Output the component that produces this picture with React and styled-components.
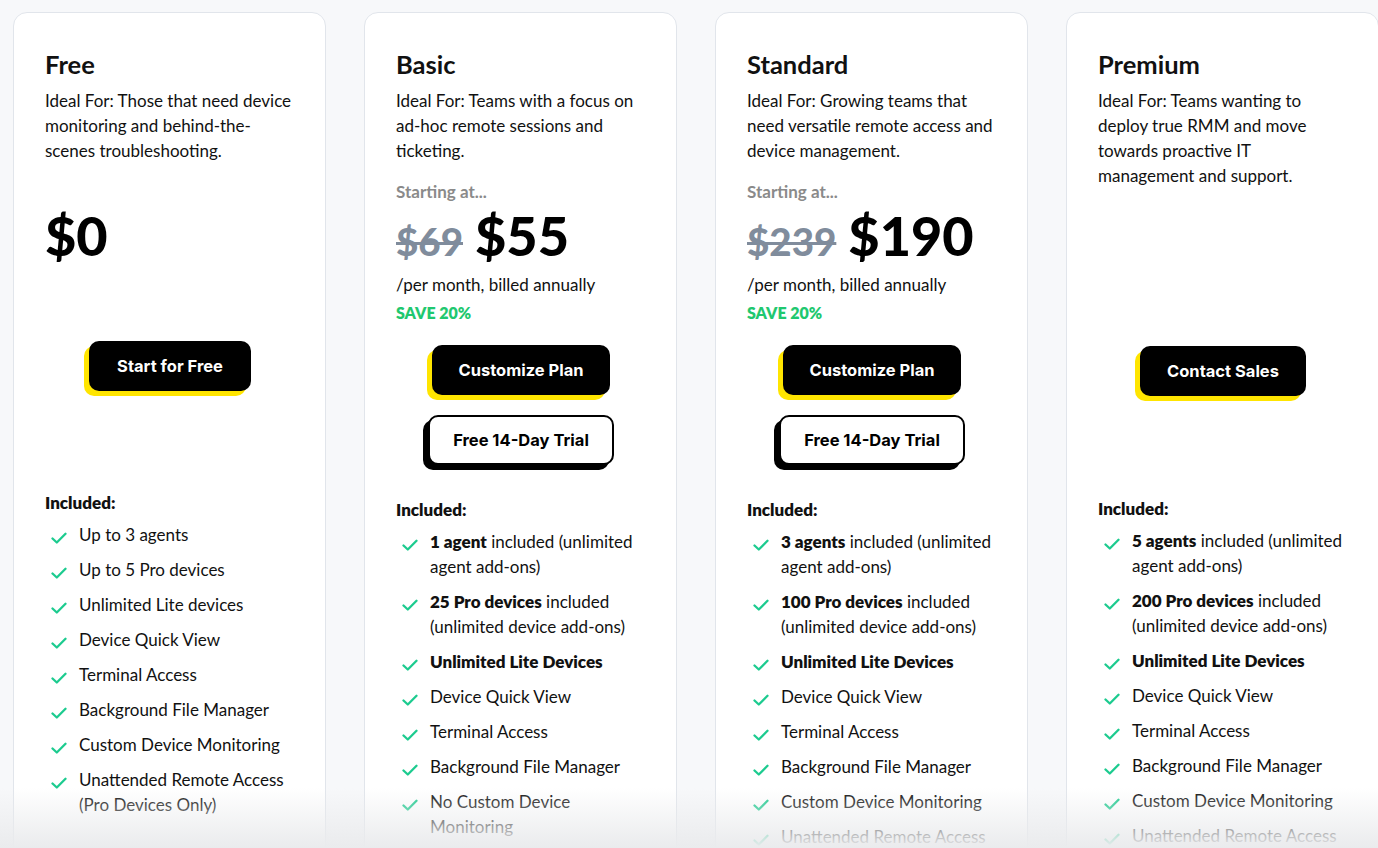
import React from "react";
import styled, { createGlobalStyle } from "styled-components";

const GlobalStyle = createGlobalStyle`
  html, body {
    margin: 0;
    padding: 0;
    background: #f7f8fa;
    overflow: hidden;
  }
  body {
    font-family: "Lato", "Liberation Sans", sans-serif;
    color: #111;
  }
`;

const Page = styled.div`
  height: 848px;
  overflow: hidden;
  position: relative;
`;

const Row = styled.div`
  display: grid;
  grid-template-columns: repeat(4, 313px);
  gap: 38px;
  padding: 12px 0 0 13px;
`;

const Card = styled.div`
  background: #fff;
  border: 1px solid #e1e5eb;
  border-radius: 14px;
  padding: 36px 30px 40px 31px;
  min-height: 900px;
  box-sizing: border-box;
`;

const Title = styled.h3`
  margin: 0;
  font-size: 25.5px;
  line-height: 30px;
  font-weight: 700;
`;

const Desc = styled.p`
  margin: 9px 0 0;
  font-size: 17px;
  line-height: 25px;
  min-height: 75px;
`;

const PriceBlock = styled.div`
  margin-top: 19px;
  height: ${(p) => p.$h}px;
`;

const Starting = styled.div`
  font-size: 17px;
  line-height: 20px;
  font-weight: 700;
  color: #8a8a8a;
  min-height: 20px;
`;

const Amount = styled.div`
  margin-top: 6px;
  display: flex;
  align-items: baseline;
  gap: 12px;
  line-height: 56px;
`;

const OldPrice = styled.span`
  font-size: 38.5px;
  font-weight: 900;
  color: #808c9c;
  text-decoration: line-through;
  text-decoration-thickness: 3px;
`;

const NewPrice = styled.span`
  font-size: 54px;
  font-weight: 900;
  color: #000;
`;

const Period = styled.div`
  margin-top: 3px;
  font-size: 17px;
  line-height: 25px;
`;

const Save = styled.div`
  font-size: 16px;
  line-height: 22px;
  font-weight: 800;
  color: #1fc86f;
  margin-top: 5px;
`;

const Actions = styled.div`
  display: flex;
  flex-direction: column;
  align-items: center;
  gap: 20px;
  margin-top: 22px;
  height: ${(p) => p.$h}px;
`;

const Button = styled.button`
  font-family: "Inter", "Liberation Sans", sans-serif;
  font-size: 16.5px;
  font-weight: 700;
  height: 50px;
  padding: 0 ${(p) => p.$pad}px;
  border-radius: 10px;
  cursor: pointer;
  color: ${(p) => (p.$outline ? "#000" : "#fff")};
  background: ${(p) => (p.$outline ? "#fff" : "#000")};
  border: ${(p) => (p.$outline ? "2px solid #000" : "none")};
  box-shadow: -5px 5px 0 ${(p) => (p.$outline ? "#000" : "#ffe500")};
`;

const IncludedLabel = styled.div`
  margin-top: 34px;
  font-size: 17px;
  line-height: 22px;
  font-weight: 800;
`;

const List = styled.ul`
  list-style: none;
  margin: 8px 0 0;
  padding: 0 0 0 6px;
  display: flex;
  flex-direction: column;
  gap: 10px;
`;

const Item = styled.li`
  display: flex;
  gap: 12px;
  font-size: 17px;
  line-height: 25px;
  b {
    font-weight: 800;
  }
`;

const Check = styled.svg`
  flex: none;
  width: 16px;
  height: 16px;
  margin-top: 8px;
`;

const Fade = styled.div`
  position: absolute;
  left: 0;
  right: 0;
  bottom: 0;
  height: 60px;
  background: linear-gradient(to bottom, rgba(236, 237, 239, 0), rgba(234, 235, 237, 1));
  pointer-events: none;
`;

const CheckIcon = () => (
  <Check viewBox="0 0 16 16">
    <path d="M1.5 8.5 L5.8 12.5 L14.5 3.8" fill="none" stroke="#1ccb8f" strokeWidth="2.3" strokeLinecap="round" strokeLinejoin="round" />
  </Check>
);

const plans = [
  {
    name: "Free",
    desc: "Ideal For: Those that need device monitoring and behind-the-scenes troubleshooting.",
    price: "$0",
    priceH: 137,
    actionsH: 117,
    buttons: [{ label: "Start for Free", pad: 28 }],
    features: [
      ["Up to 3 agents"],
      ["Up to 5 Pro devices"],
      ["Unlimited Lite devices"],
      ["Device Quick View"],
      ["Terminal Access"],
      ["Background File Manager"],
      ["Custom Device Monitoring"],
      ["Unattended Remote Access (Pro Devices Only)"],
    ],
  },
  {
    name: "Basic",
    desc: "Ideal For: Teams with a focus on ad-hoc remote sessions and ticketing.",
    starting: true,
    old: "$69",
    price: "$55",
    save: true,
    priceH: 141,
    actionsH: 120,
    buttons: [
      { label: "Customize Plan", pad: 26 },
      { label: "Free 14-Day Trial", outline: true, pad: 23 },
    ],
    features: [
      ["", "1 agent", " included (unlimited agent add-ons)"],
      ["", "25 Pro devices", " included (unlimited device add-ons)"],
      ["", "Unlimited Lite Devices"],
      ["Device Quick View"],
      ["Terminal Access"],
      ["Background File Manager"],
      ["No Custom Device Monitoring"],
      ["Unattended Remote Access"],
    ],
  },
  {
    name: "Standard",
    desc: "Ideal For: Growing teams that need versatile remote access and device management.",
    starting: true,
    old: "$239",
    price: "$190",
    save: true,
    priceH: 141,
    actionsH: 120,
    buttons: [
      { label: "Customize Plan", pad: 26 },
      { label: "Free 14-Day Trial", outline: true, pad: 23 },
    ],
    features: [
      ["", "3 agents", " included (unlimited agent add-ons)"],
      ["", "100 Pro devices", " included (unlimited device add-ons)"],
      ["", "Unlimited Lite Devices"],
      ["Device Quick View"],
      ["Terminal Access"],
      ["Background File Manager"],
      ["Custom Device Monitoring"],
      ["Unattended Remote Access"],
    ],
  },
  {
    name: "Premium",
    desc: "Ideal For: Teams wanting to deploy true RMM and move towards proactive IT management and support.",
    priceH: 117,
    actionsH: 118,
    buttons: [{ label: "Contact Sales", pad: 27 }],
    features: [
      ["", "5 agents", " included (unlimited agent add-ons)"],
      ["", "200 Pro devices", " included (unlimited device add-ons)"],
      ["", "Unlimited Lite Devices"],
      ["Device Quick View"],
      ["Terminal Access"],
      ["Background File Manager"],
      ["Custom Device Monitoring"],
      ["Unattended Remote Access"],
    ],
  },
];

function PlanCard({ plan }) {
  return (
    <Card>
      <Title>{plan.name}</Title>
      <Desc>{plan.desc}</Desc>
      <PriceBlock $h={plan.priceH}>
        {plan.price && (
          <>
            <Starting>{plan.starting ? "Starting at..." : ""}</Starting>
            <Amount>
              {plan.old && <OldPrice>{plan.old}</OldPrice>}
              <NewPrice>{plan.price}</NewPrice>
            </Amount>
          </>
        )}
        {plan.save && (
          <>
            <Period>/per month, billed annually</Period>
            <Save>SAVE 20%</Save>
          </>
        )}
      </PriceBlock>
      <Actions $h={plan.actionsH}>
        {plan.buttons.map((b) => (
          <Button key={b.label} $outline={b.outline} $pad={b.pad}>
            {b.label}
          </Button>
        ))}
      </Actions>
      <IncludedLabel>Included:</IncludedLabel>
      <List>
        {plan.features.map((f, i) => (
          <Item key={i}>
            <CheckIcon />
            <span>
              {f[0]}
              {f[1] && <b>{f[1]}</b>}
              {f[2]}
            </span>
          </Item>
        ))}
      </List>
    </Card>
  );
}

export default function App() {
  return (
    <Page>
      <GlobalStyle />
      <Row>
        {plans.map((p) => (
          <PlanCard key={p.name} plan={p} />
        ))}
      </Row>
      <Fade />
    </Page>
  );
}
